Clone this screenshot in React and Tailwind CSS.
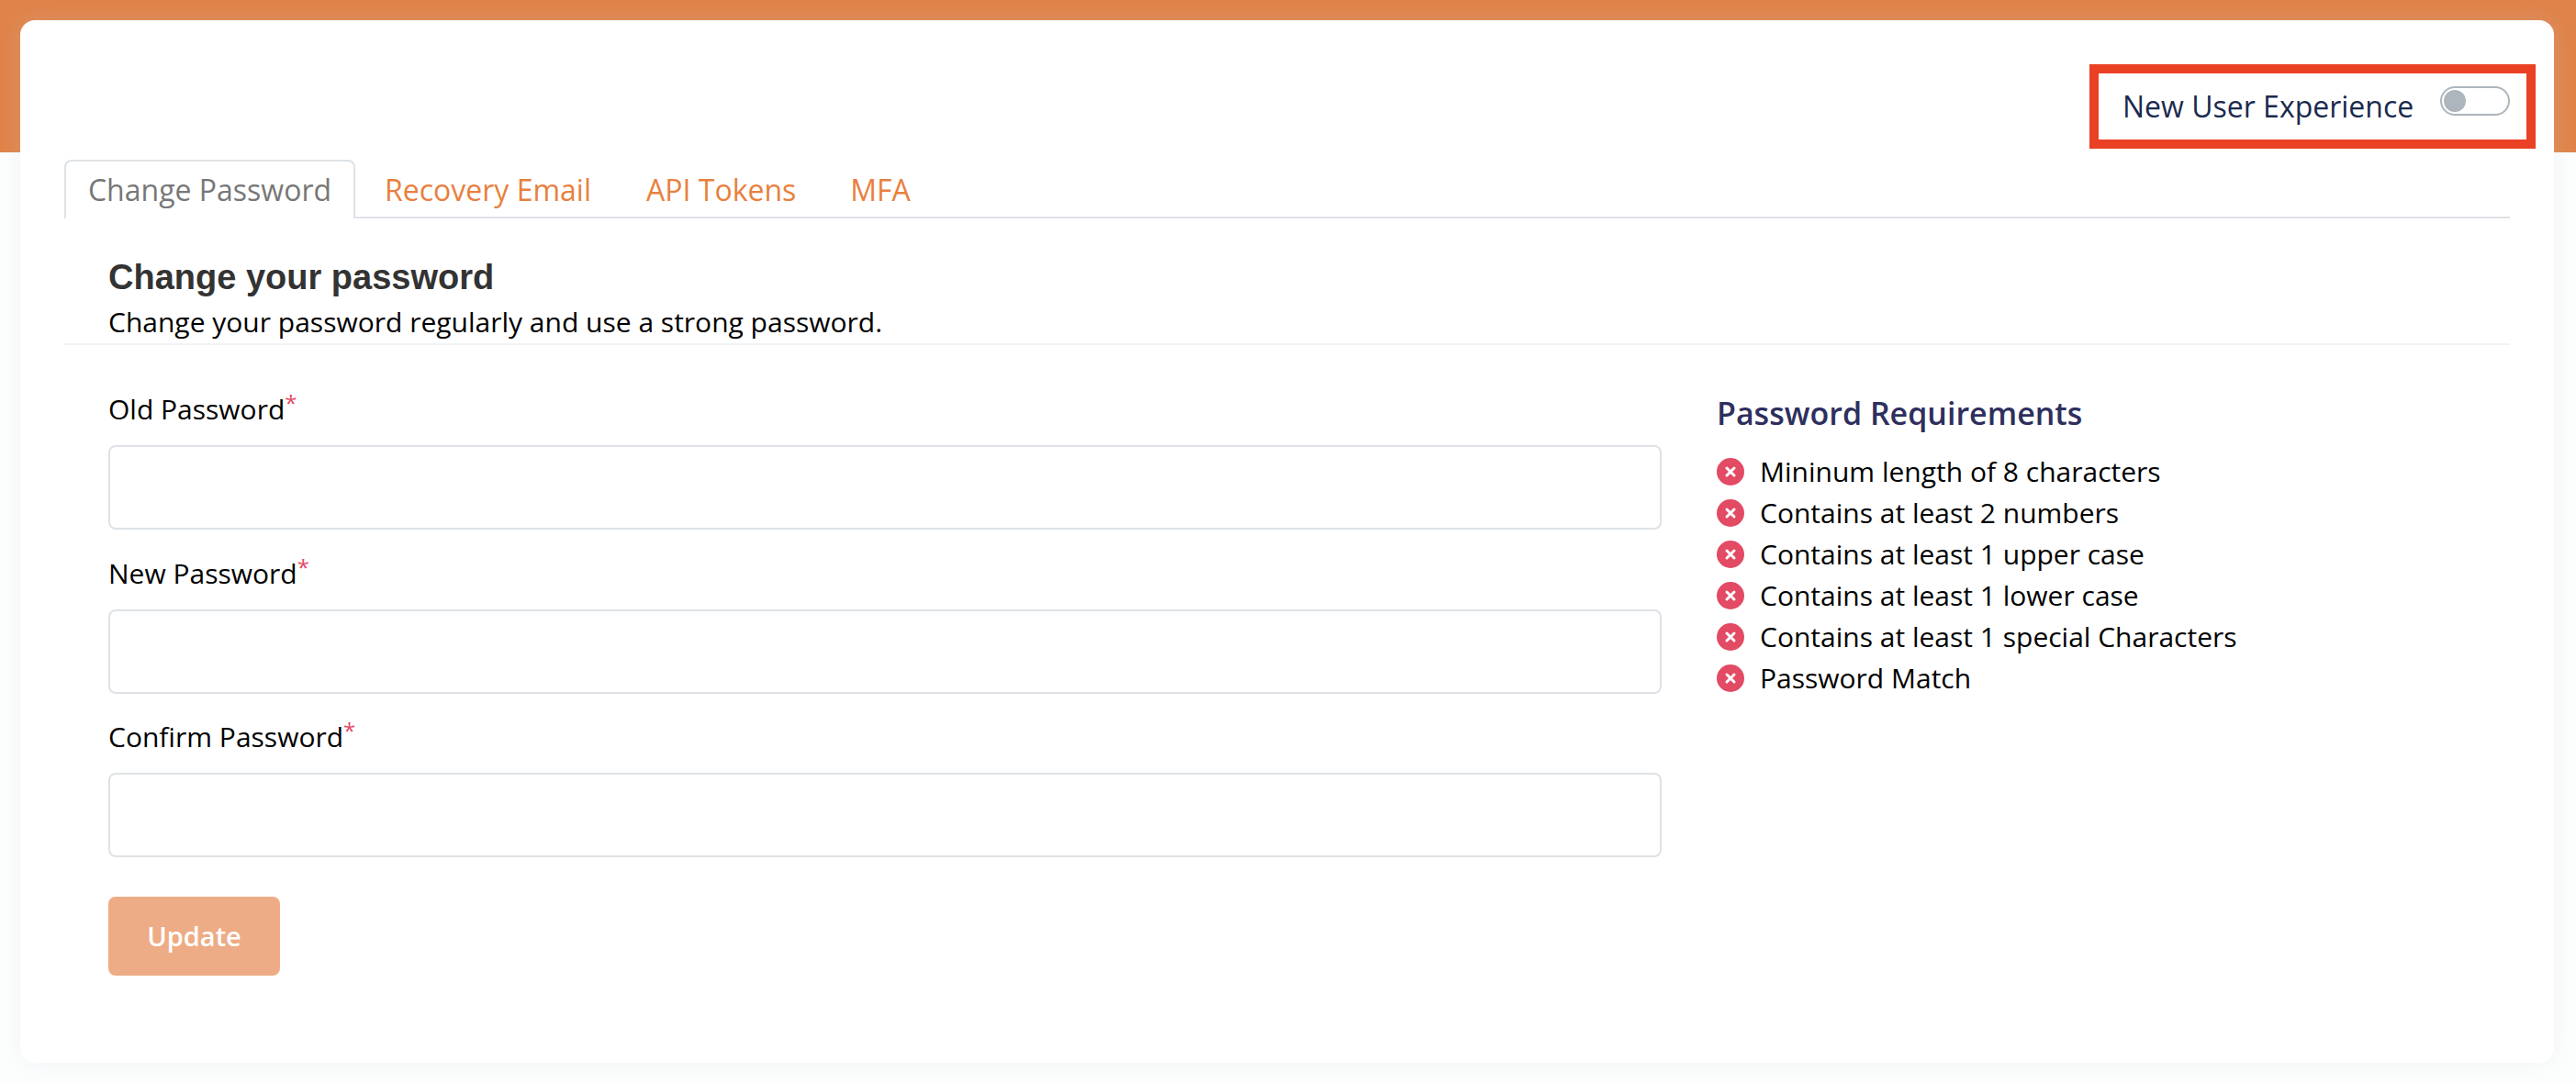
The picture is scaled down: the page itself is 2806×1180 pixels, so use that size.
const tabs = [
  { label: "Recovery Email", cls: "ml-[32px] mr-[60px]" },
  { label: "API Tokens", cls: "mr-[59px]" },
  { label: "MFA", cls: "" },
];

const fields = ["Old Password", "New Password", "Confirm Password"];

const requirements = [
  "Mininum length of 8 characters",
  "Contains at least 2 numbers",
  "Contains at least 1 upper case",
  "Contains at least 1 lower case",
  "Contains at least 1 special Characters",
  "Password Match",
];

function Field({ label }) {
  return (
    <div className="mb-[25.5px]">
      <label className="block h-[44px] leading-[44px] mb-[17px] text-[30px] text-black">
        {label}
        <span className="text-[24px] text-[#e34a64] relative top-[-9px]">*</span>
      </label>
      <input
        type="password"
        className="block w-full h-[92px] rounded-[8px] border-2 border-[#dee2e6] bg-white"
      />
    </div>
  );
}

function XIcon() {
  return (
    <span className="w-[30px] h-[30px] rounded-full bg-[#e34a64] flex items-center justify-center shrink-0">
      <svg width="14" height="14" viewBox="0 0 14 14">
        <path d="M3 3l8 8M11 3l-8 8" stroke="#fff" strokeWidth="3" strokeLinecap="round" />
      </svg>
    </span>
  );
}

export default function App() {
  return (
    <div
      className="w-[2806px] h-[1180px] pt-[22px] pl-[22px] pr-[24px] overflow-hidden bg-[linear-gradient(#e0834a_166px,#fcfdfd_166px)]"
      style={{ fontFamily: '"Open Sans", sans-serif' }}
    >
      <div className="h-[1136px] rounded-[16px] bg-white pt-[48px] shadow-[0_0_24px_rgba(200,210,220,0.2)]">
        <div className="flex justify-end pr-[20px]">
          <div className="w-[486px] h-[92px] border-[10px] border-[#ea4125] flex items-center pl-[26px]">
            <span className="text-[32px] leading-[44px] text-[#1b2a4e] w-[346px]">New User Experience</span>
            <span className="w-[76px] h-[32px] rounded-full border-2 border-[#adb5bd] flex items-center pl-[2px] mt-[-12px]">
              <span className="w-[24px] h-[24px] rounded-full bg-[#adb5bd]" />
            </span>
          </div>
        </div>

        <div className="mx-[48px] mt-[12px] h-[64px] flex items-end border-b-2 border-[#dee2e6]">
          <div className="h-[64px] w-[317px] -mb-[2px] flex items-center justify-center rounded-t-[8px] border-2 border-b-0 border-[#dee2e6] bg-white text-[32px] text-[#777777]">
            Change Password
          </div>
          {tabs.map((t) => (
            <a key={t.label} className={`${t.cls} text-[32px] leading-[58px] text-[#e8803e]`}>
              {t.label}
            </a>
          ))}
        </div>

        <div className="mx-[48px] px-[48px] h-[138px] border-b-2 border-[#f1f3f5]">
          <h1 className="pt-[40px] text-[38px] leading-[48px] font-bold text-[#333333]" style={{ fontFamily: '"Liberation Sans", sans-serif' }}>
            Change your password
          </h1>
          <p className="mt-[3px] text-[30px] leading-[44px] text-black">Change your password regularly and use a strong password.</p>
        </div>

        <div className="mx-[48px] px-[48px] pt-[48px] flex">
          <div className="w-[1692px] shrink-0">
            {fields.map((f) => (
              <Field key={f} label={f} />
            ))}
            <button className="mt-[17.5px] w-[187px] h-[86px] rounded-[8px] bg-[#edac85] text-white text-[29px] font-semibold">
              Update
            </button>
          </div>
          <div className="ml-[60px] pt-[4px]">
            <h2 className="text-[34px] leading-[44px] font-semibold text-[#2e2f5e] mb-[19px]">Password Requirements</h2>
            {requirements.map((r) => (
              <div key={r} className="h-[45px] flex items-center gap-[17px] text-[30px] text-black">
                <XIcon />
                {r}
              </div>
            ))}
          </div>
        </div>
      </div>
    </div>
  );
}
